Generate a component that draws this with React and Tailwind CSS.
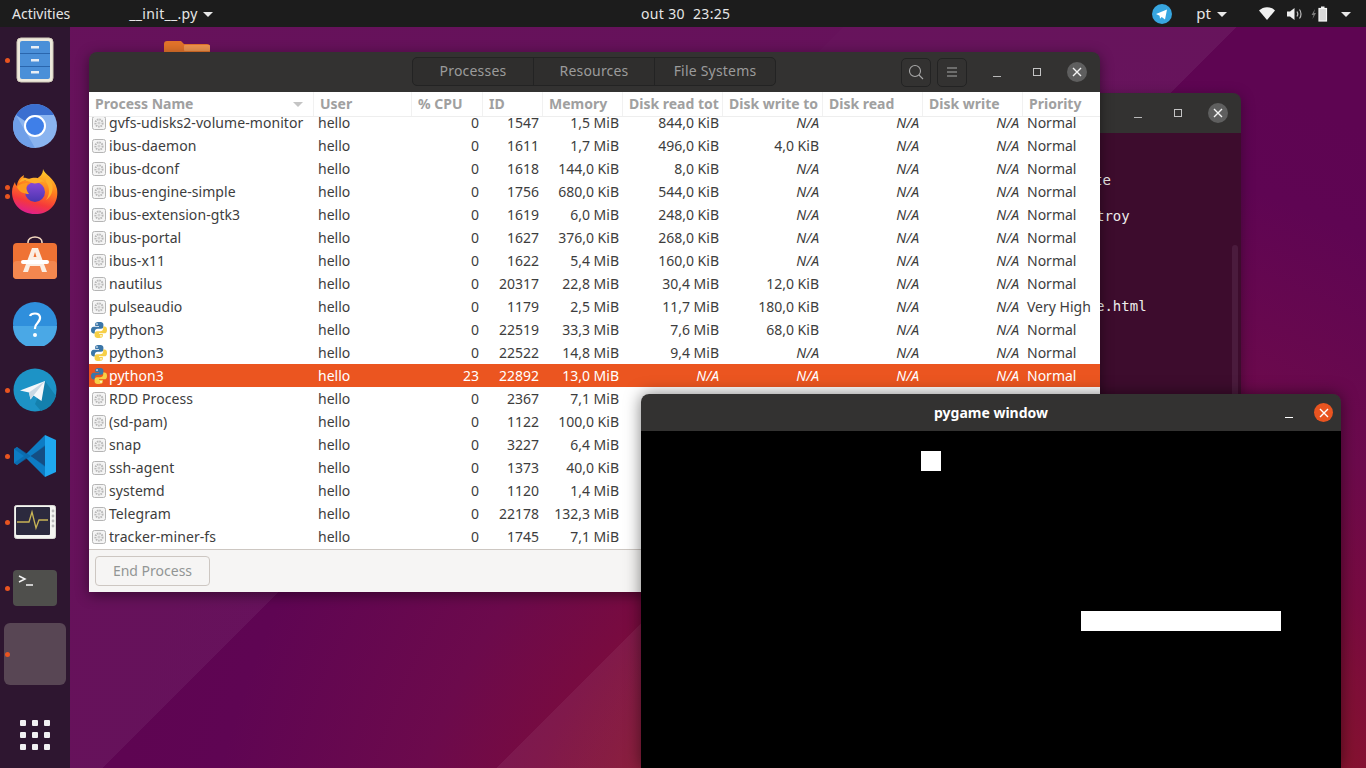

const F = "font-['Noto_Sans',sans-serif]";
const rows = [
  ["gvfs-udisks2-volume-monitor","0","1547","1,5 MiB","844,0 KiB","N/A","N/A","N/A","Normal"],
  ["ibus-daemon","0","1611","1,7 MiB","496,0 KiB","4,0 KiB","N/A","N/A","Normal"],
  ["ibus-dconf","0","1618","144,0 KiB","8,0 KiB","N/A","N/A","N/A","Normal"],
  ["ibus-engine-simple","0","1756","680,0 KiB","544,0 KiB","N/A","N/A","N/A","Normal"],
  ["ibus-extension-gtk3","0","1619","6,0 MiB","248,0 KiB","N/A","N/A","N/A","Normal"],
  ["ibus-portal","0","1627","376,0 KiB","268,0 KiB","N/A","N/A","N/A","Normal"],
  ["ibus-x11","0","1622","5,4 MiB","160,0 KiB","N/A","N/A","N/A","Normal"],
  ["nautilus","0","20317","22,8 MiB","30,4 MiB","12,0 KiB","N/A","N/A","Normal"],
  ["pulseaudio","0","1179","2,5 MiB","11,7 MiB","180,0 KiB","N/A","N/A","Very High"],
  ["python3","0","22519","33,3 MiB","7,6 MiB","68,0 KiB","N/A","N/A","Normal"],
  ["python3","0","22522","14,8 MiB","9,4 MiB","N/A","N/A","N/A","Normal"],
  ["python3","23","22892","13,0 MiB","N/A","N/A","N/A","N/A","Normal"],
  ["RDD Process","0","2367","7,1 MiB","N/A","N/A","","",""],
  ["(sd-pam)","0","1122","100,0 KiB","","","","",""],
  ["snap","0","3227","6,4 MiB","","","","",""],
  ["ssh-agent","0","1373","40,0 KiB","","","","",""],
  ["systemd","0","1120","1,4 MiB","","","","",""],
  ["Telegram","0","22178","132,3 MiB","","","","",""],
  ["tracker-miner-fs","0","1745","7,1 MiB","","","","",""],
];
const grid = "grid grid-cols-[225px_98px_71px_60px_80px_100px_100px_100px_100px_77px]";

function GearIcon() {
  return (
    <svg width="14" height="14" viewBox="0 0 14 14" className="shrink-0">
      <rect x="0.5" y="0.5" width="13" height="13" rx="2" fill="#f4f4f4" stroke="#b5b5b5" />
      <circle cx="7" cy="7" r="3.6" fill="none" stroke="#b8b8b8" strokeWidth="2" strokeDasharray="1.6 0.8" />
      <circle cx="7" cy="7" r="1.6" fill="#d0d0d0" />
    </svg>
  );
}
function PyIcon() {
  return (
    <svg width="18" height="18" viewBox="0 0 18 18" className="shrink-0">
      <path d="M8.8 1C5.5 1 5.2 2.2 5.2 3.4V5h3.8v.7H3.6C2 5.700 1 7 1 9.100c0 2.200 1 3.300 2.500 3.300h1.300v-1.800c0-1.600 1.300-2.800 2.900-2.800h3.400c1.300 0 2.300-1 2.300-2.300V3.400C13.400 2 12.100 1 10.700 1z" fill="#3b76a8" />
      <circle cx="7" cy="3.100" r=".8" fill="#fff" />
      <path d="M9.200 17c3.300 0 3.600-1.200 3.600-2.400V13H9v-.7h5.400c1.600 0 2.600-1.300 2.600-3.400 0-2.200-1-3.300-2.500-3.300h-1.300v1.800c0 1.600-1.300 2.800-2.900 2.800H6.900c-1.300 0-2.300 1-2.300 2.300v2.100C4.600 16 5.900 17 7.300 17z" fill="#f6cf47" />
      <circle cx="11" cy="14.900" r=".8" fill="#fff" />
    </svg>
  );
}
function Row({ r }) {
  const sel = r[1] === "23";
  const isPy = r[0] === "python3";
  const cell = "text-right pr-1 whitespace-nowrap overflow-hidden";
  const val = (v, i) => (
    <div key={i} className={`${cell} ${v === "N/A" ? "italic" : ""}`}>{v}</div>
  );
  return (
    <div className={`${grid} h-[23px] leading-[23px] text-[14px] shrink-0 ${sel ? "bg-[#eb5520] text-white" : "bg-white text-[#3d3d3d]"}`}>
      <div className={`flex items-center whitespace-nowrap ${isPy ? "pl-[1px] gap-[1px]" : "pl-[3px] gap-[3px]"}`}>
        {isPy ? <PyIcon /> : <GearIcon />}
        <span className="tracking-[0.07px]">{r[0]}</span>
      </div>
      <div className="pl-1">hello</div>
      {r.slice(1, 8).map(val)}
      <div className="pl-1 whitespace-nowrap">{r[8]}</div>
    </div>
  );
}
function WinBtns({ closeBg = "bg-[#5f5f5f]" }) {
  return (
    <>
      <svg width="12" height="12" viewBox="0 0 12 12"><path d="M2 10.500h8" stroke="#b8b8b8" strokeWidth="1" /></svg>
      <svg width="12" height="12" viewBox="0 0 12 12" className="ml-7"><rect x="2.500" y="2.500" width="7" height="7" fill="none" stroke="#c4c4c4" /></svg>
      <div className={`ml-6 w-5 h-5 rounded-full ${closeBg} flex items-center justify-center`}>
        <svg width="10" height="10" viewBox="0 0 10 10"><path d="M1 1l8 8M9 1l-8 8" stroke="#f4f4f4" strokeWidth="1.400" /></svg>
      </div>
    </>
  );
}
function Caret({ c = "#e8e8e8" }) {
  return <svg width="10" height="5" viewBox="0 0 10 5"><path d="M0 0h10L5 5z" fill={c} /></svg>;
}
function Topbar() {
  return (
    <div className="h-[27px] bg-[#1c1c1c] text-[#e6e6e6] text-[14px] flex items-center relative shrink-0 z-30">
      <span className="ml-3">Activities</span>
      <span className="ml-[59px] tracking-[0.3px]">__init__.py</span>
      <span className="ml-[5px] mt-[1px]"><Caret /></span>
      <span className="absolute left-[641px] tracking-[0.35px]">out 30&nbsp;&nbsp;23:25</span>
      <div className="ml-auto flex items-center">
        <svg width="20" height="20" viewBox="0 0 20 20"><circle cx="10" cy="10" r="10" fill="#37a6e0" /><path d="M4 10l11-4.500-2 10-3.300-2.500-1.700 1.800-.4-3z" fill="#fff" /></svg>
        <span className="ml-[24px] text-[15px]">pt</span>
        <span className="ml-[6px] mt-[1px]"><Caret /></span>
        <svg className="ml-[32px]" width="16" height="13" viewBox="0 0 16 13"><path d="M0 3.500C4.500-1 11.500-1 16 3.500L8 13z" fill="#f2f2f2" /></svg>
        <svg className="ml-[12px]" width="15" height="14" viewBox="0 0 15 14"><path d="M0 4.500h3L7.500 1v12L3 9.500H0z" fill="#eee" /><path d="M10 4.500c1 1.500 1 3.500 0 5M12.500 2.500c2 2.500 2 6.500 0 9" stroke="#bbb" strokeWidth="1.200" fill="none" /></svg>
        <svg className="ml-[9px]" width="17" height="16" viewBox="0 0 17 16"><path d="M4 3L0.500 9h2L1.500 13 5 7H3z" fill="#7a7a7a" /><rect x="8" y="2.500" width="7.500" height="12.500" fill="#d8d8d8" stroke="#f6f6f6" strokeWidth="1.200" /><rect x="10" y="0.500" width="3.500" height="1.500" fill="#f2f2f2" /></svg>
        <span className="ml-[13px] mr-[15px] mt-[1px]"><Caret /></span>
      </div>
    </div>
  );
}
const Cabinet = () => (
  <svg width="38" height="46" viewBox="0 0 38 46">
    <rect x="1" y="1" width="36" height="44" rx="4" fill="#eee9dc" stroke="#cfc9b8" />
    <rect x="4" y="4" width="30" height="38" rx="2" fill="#4a8fd8" />
    <rect x="4" y="16" width="30" height="1" fill="#2a66ad" /><rect x="4" y="29" width="30" height="1" fill="#2a66ad" />
    <rect x="15" y="9" width="8" height="2.500" fill="#e8eef5" /><rect x="15" y="22" width="8" height="2.500" fill="#e8eef5" /><rect x="15" y="34" width="8" height="2.500" fill="#e8eef5" />
  </svg>
);
const Chromium = () => (
  <svg width="44" height="44" viewBox="0 0 44 44">
    <circle cx="22" cy="22" r="22" fill="#8ab4f0" />
    <path d="M3 11A22 22 0 0 1 41 11H22a11 11 0 0 0-10 6z" fill="#3b6fd0" />
    <path d="M3 11l9.500 16.500L22 44A22 22 0 0 1 3 11z" fill="#6f9fe8" />
    <circle cx="22" cy="22" r="10" fill="#3f7fe8" stroke="#fff" strokeWidth="2" />
  </svg>
);
const Firefox = () => (
  <svg width="46" height="46" viewBox="0 0 46 46">
    <defs>
      <linearGradient id="ff" x1="0.700" y1="0" x2="0.400" y2="1"><stop offset="0" stopColor="#ffd02a" /><stop offset="0.45" stopColor="#ff7a1f" /><stop offset="0.75" stopColor="#f5383c" /><stop offset="1" stopColor="#e01f8e" /></linearGradient>
      <linearGradient id="fg" x1="0.500" y1="0" x2="0.500" y2="1"><stop offset="0" stopColor="#8a4ad8" /><stop offset="1" stopColor="#4a36b0" /></linearGradient>
    </defs>
    <path d="M31 0c1 5 12 9 14 20 2 13-6 25-22 25C9 45 0 35 0 23c0-5 2-8 3-10 0 2 1 3 2 4 0-4 3-9 7-11-1 3 0 5 1 6 3-2 7-3 11-2 4-2 7-5 7-10z" fill="url(#ff)" />
    <circle cx="23" cy="23" r="10" fill="url(#fg)" />
    <path d="M7 14c5-4 10-2 13 0 3 1 7 0 9-1 2-1 4 0 5 2-3-5-9-7-14-6-2 1-4 1-6 0-3-1-6 2-7 5z" fill="#ffb02a" />
    <path d="M5 18c2 5 7 7 12 7-2-3-4-6-1-11-5 0-9 1-11 4z" fill="#ff9a1f" />
    <path d="M34 13c4 5 4 13 0 18 5-3 8-10 6-16-1-4-4-7-6-9z" fill="#ffb02a" />
  </svg>
);
const Software = () => (
  <svg width="44" height="44" viewBox="0 0 44 44">
    <path d="M15 8V6a7 5 0 0 1 14 0v2" fill="none" stroke="#f5d9c0" strokeWidth="1.600" />
    <rect x="0" y="7" width="44" height="36" rx="4" fill="#ef7234" />
    <rect x="0" y="25" width="44" height="18" rx="4" fill="#f4874f" />
    <path d="M19 12h6l9 24h-5l-2-6H17l-2 6h-5z" fill="#fbeee3" />
    <rect x="8" y="24" width="28" height="4" rx="2" fill="#fff" />
    <path d="M20.500 21h3L22 16z" fill="#ef7234" />
  </svg>
);
const Help = () => (
  <svg width="44" height="44" viewBox="0 0 44 44">
    <circle cx="22" cy="22" r="22" fill="#2f8fdc" />
    <path d="M0 24h44a22 22 0 0 1-44 0z" fill="#4aa8e6" />
    <path d="M17 14c1-3 9-4 10 1 1 5-5 6-5 11v1" fill="none" stroke="#fff" strokeWidth="2.200" />
    <circle cx="22" cy="33" r="2" fill="#fff" />
  </svg>
);
const Tele = () => (
  <svg width="44" height="44" viewBox="0 0 44 44">
    <circle cx="22" cy="22" r="21.500" fill="#1d93c6" />
    <path d="M32 13L22 36l6 7a21.500 21.500 0 0 0 15-15z" fill="#1480ad" />
    <path d="M7 22.500L32 13l-3.500 20-8-5.500-3 4-1.500-7z" fill="#f4f7fa" />
    <path d="M16 24.500L32 13 20.500 27.500l-3 4z" fill="#c9d8e4" />
  </svg>
);
const VSCode = () => (
  <svg width="42" height="42" viewBox="0 0 42 42">
    <path d="M31 0l11 5v32l-11 5V0z" fill="#1fa7f0" />
    <path d="M31 0L12 19 3 12 0 14v14l3 2 9-7 19 19 0-11-14-10 14-10z" fill="#0d7cc4" />
    <path d="M31 10L17 21 3 12l-3 2 10 7-10 7 3 2 14-9 14 11z" fill="#0a66a8" opacity="0.7" />
  </svg>
);
const Monitor = () => (
  <svg width="42" height="34" viewBox="0 0 42 34">
    <rect x="0.500" y="0.500" width="41" height="33" rx="2" fill="#f5f5f2" stroke="#d8d8d4" />
    <rect x="2" y="2" width="34" height="28" rx="1" fill="#2c2a3e" />
    <path d="M3 17h12l3-10 4 16 3-8h9" fill="none" stroke="#c7b455" strokeWidth="1.300" />
    <circle cx="39" cy="6" r="1.400" fill="#bbb" /><circle cx="39" cy="11" r="1.400" fill="#bbb" /><circle cx="39" cy="16" r="1.400" fill="#bbb" /><circle cx="39" cy="21" r="1.400" fill="#bbb" />
  </svg>
);
const Terminal = () => (
  <svg width="44" height="36" viewBox="0 0 44 36">
    <rect width="44" height="36" rx="4" fill="#4f4f4c" />
    <path d="M6 6l6 3-6 3" fill="none" stroke="#f4f4f4" strokeWidth="1.500" />
    <path d="M13 15h7" stroke="#f4f4f4" strokeWidth="1.500" />
  </svg>
);
function Slot({ children, dots = 0 }) {
  return (
    <div className="h-[66px] shrink-0 flex items-center justify-center relative">
      {dots > 0 && (
        <div className="absolute left-[5px] top-0 bottom-0 flex flex-col justify-center gap-1">
          {Array.from({ length: dots }).map((_, i) => (
            <div key={i} className="w-[5px] h-[5px] rounded-full bg-[#e95420]" />
          ))}
        </div>
      )}
      {children}
    </div>
  );
}
function Dock() {
  return (
    <div className="w-[70px] shrink-0 bg-[#2e1630] flex flex-col z-20 relative">
      <Slot dots={1}><Cabinet /></Slot>
      <Slot><Chromium /></Slot>
      <Slot dots={2}><Firefox /></Slot>
      <Slot><Software /></Slot>
      <Slot><Help /></Slot>
      <Slot dots={1}><Tele /></Slot>
      <Slot dots={1}><VSCode /></Slot>
      <Slot dots={1}><Monitor /></Slot>
      <Slot dots={1}><Terminal /></Slot>
      <Slot dots={1}><div className="w-[62px] h-[62px] rounded-md bg-[#584654]" /></Slot>
      <div className="mt-auto mb-[18px] mx-auto grid grid-cols-3 gap-[6px]">
        {Array.from({ length: 9 }).map((_, i) => (
          <div key={i} className="w-[6px] h-[6px] bg-[#f2f0f2] rounded-[1px]" />
        ))}
      </div>
    </div>
  );
}
function Hcell({ children, cls = "" }) {
  return <div className={`pl-[6px] border-r border-[#f1f1f1] whitespace-nowrap ${cls}`}>{children}</div>;
}
function SystemMonitor() {
  return (
    <div className="absolute left-[89px] top-[52px] w-[1011px] h-[540px] rounded-t-lg flex flex-col overflow-hidden shadow-[0_3px_14px_rgba(0,0,0,0.45)] z-10">
      <div className="h-[40px] bg-[#333231] flex items-center shrink-0 relative">
        <div className="absolute left-[323px] top-[5px] w-[364px] h-[29px] rounded-[5px] border border-[#232323] bg-[#2f2e2d] grid grid-cols-[121px_121px_1fr] text-[14px] text-[#9b9b9b] text-center leading-[26px] tracking-[0.2px]">
          <div className="border-r border-[#232323]">Processes</div>
          <div className="border-r border-[#232323]">Resources</div>
          <div>File Systems</div>
        </div>
        <div className="ml-auto flex items-center pr-[13px]">
          <div className="w-[30px] h-[29px] rounded-[5px] border border-[#232323] flex items-center justify-center">
            <svg width="16" height="16" viewBox="0 0 16 16"><circle cx="7" cy="7" r="5.500" fill="none" stroke="#a8a8a8" strokeWidth="1.100" /><path d="M11 11l4 4" stroke="#a8a8a8" strokeWidth="1.100" /></svg>
          </div>
          <div className="ml-[6px] mr-[24px] w-[30px] h-[29px] rounded-[5px] border border-[#232323] flex items-center justify-center">
            <svg width="12" height="12" viewBox="0 0 12 12"><path d="M1 2h10M1 6h10M1 10h10" stroke="#a8a8a8" /></svg>
          </div>
          <WinBtns />
        </div>
      </div>
      <div className={`${grid} bg-white h-[25px] leading-[24px] text-[14px] font-bold text-[#a0a0a0] border-b border-[#eeeeee] shrink-0 relative z-10`}>
        <Hcell><div className="flex items-center justify-between pr-[10px]"><span>Process Name</span><svg width="10" height="5" viewBox="0 0 10 5"><path d="M0 0h10L5 5z" fill="#c4c4c4" /></svg></div></Hcell>
        <Hcell>User</Hcell>
        <Hcell>% CPU</Hcell>
        <Hcell>ID</Hcell>
        <Hcell>Memory</Hcell>
        <Hcell>Disk read tot</Hcell>
        <Hcell>Disk write to</Hcell>
        <Hcell>Disk read</Hcell>
        <Hcell>Disk write</Hcell>
        <Hcell cls="border-r-0">Priority</Hcell>
      </div>
      <div className="flex-1 overflow-hidden bg-white min-h-0">
        <div className="-mt-[6px]">
          {rows.map((r, i) => <Row key={i} r={r} />)}
        </div>
      </div>
      <div className="h-[43px] shrink-0 bg-[#f6f5f4] border-t border-[#cdc7c2] px-[6px] pt-[6px]">
        <div className="w-[115px] h-[30px] border border-[#cdc7c2] rounded-[4px] text-center leading-[28px] text-[14px] text-[#929595]">End Process</div>
      </div>
    </div>
  );
}
function TerminalWin() {
  return (
    <div className="absolute left-[700px] top-[93px] w-[541px] h-[500px] rounded-t-lg overflow-hidden flex flex-col shadow-[0_3px_14px_rgba(0,0,0,0.35)]">
      <div className="h-[40px] bg-[#333231] shrink-0 flex items-center justify-end pr-[13px]"><WinBtns /></div>
      <div className="flex-1 bg-[#3d0c2d] relative pl-[394px] pt-[38px] font-['DejaVu_Sans_Mono',monospace] text-[14px] leading-[18px] text-[#eeeeec] whitespace-pre">
        <div>te</div>
        <div>&nbsp;</div>
        <div className="pl-[2px]">troy</div>
        <div>&nbsp;</div><div>&nbsp;</div><div>&nbsp;</div><div>&nbsp;</div>
        <div className="pl-[2px]">e.html</div>
        <div className="absolute right-[3px] top-[112px] w-[6px] h-[300px] rounded-full bg-[#4b1b3d]" />
      </div>
    </div>
  );
}
function Pygame() {
  return (
    <div className="absolute left-[641px] top-[394px] w-[700px] h-[374px] rounded-t-lg overflow-hidden flex flex-col shadow-[0_0_16px_rgba(0,0,0,0.5)] z-20">
      <div className="h-[37px] bg-[#333231] shrink-0 flex items-center relative text-white">
        <span className="absolute inset-x-0 text-center font-bold text-[14px]">pygame window</span>
        <div className="ml-auto pr-[8px] flex items-center relative">
          <svg width="12" height="12" viewBox="0 0 12 12"><path d="M1 10.500h8" stroke="#ffffff" strokeWidth="1.200" /></svg>
          <div className="ml-[18px] w-[19px] h-[19px] rounded-full bg-[#e95420] flex items-center justify-center">
            <svg width="10" height="10" viewBox="0 0 10 10"><path d="M1 1l8 8M9 1l-8 8" stroke="#fff" strokeWidth="1.400" /></svg>
          </div>
        </div>
      </div>
      <div className="flex-1 bg-black relative">
        <div className="absolute left-[280px] top-[20px] w-5 h-5 bg-white" />
        <div className="absolute left-[440px] top-[180px] w-[200px] h-5 bg-white" />
      </div>
    </div>
  );
}
export default function App() {
  return (
    <div className={`w-[1366px] h-[768px] overflow-hidden flex flex-col ${F}`}>
      <Topbar />
      <div className="flex-1 flex min-h-0">
        <Dock />
        <div className="flex-1" />
      </div>
      <div className="absolute left-0 top-0 w-[1366px] h-[768px] -z-10 bg-[radial-gradient(circle_900px_at_1000px_950px,#9a1c22_30%,#861230_44%,#780b40_55%,#6c0a4c_67%,#5f0553_89%,#5e0552_100%)]">
        <div className="absolute inset-0 bg-[linear-gradient(135deg,rgba(255,255,255,0.05)_40.8%,transparent_40.8%)]" />
        <div className="absolute left-0 top-0 w-[1366px] h-[100px] bg-[linear-gradient(135deg,transparent_59.4%,rgba(255,255,255,0.06)_59.4%,rgba(255,255,255,0.06)_86.2%,transparent_86.2%)]" />
        <div className="absolute left-0 top-[592px] w-[641px] h-[176px] bg-[linear-gradient(135deg,transparent_82.3%,rgba(255,255,255,0.06)_82.3%)]" />
        <svg width="46" height="20" viewBox="0 0 46 20" className="absolute left-[164px] top-[40px]">
          <path d="M0 4a3 3 0 0 1 3-3h14l3 3h23a3 3 0 0 1 3 3v13H0z" fill="#e3732a" />
          <rect x="20" y="5" width="26" height="6" rx="1" fill="#f0954f" />
        </svg>
      </div>
      <TerminalWin />
      <SystemMonitor />
      <Pygame />
    </div>
  );
}
